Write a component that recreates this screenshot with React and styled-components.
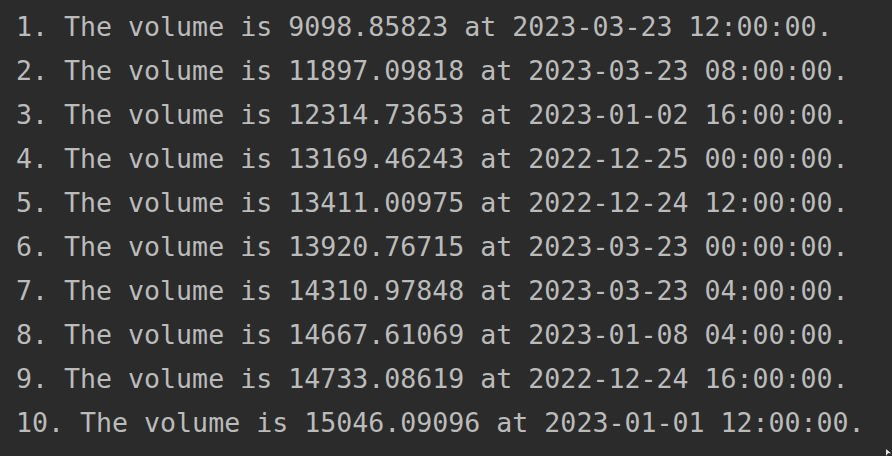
import React from "react";
import styled, { createGlobalStyle } from "styled-components";

const Global = createGlobalStyle`
  html, body { margin: 0; padding: 0; background: #2b2b2b; }
  body { width: 892px; height: 456px; overflow: hidden; }
`;

const Console = styled.div`
  box-sizing: border-box;
  width: 892px;
  height: 456px;
  background: #2b2b2b;
  padding: 5px 0 0 16px;
  display: flex;
  flex-direction: column;
  position: relative;
`;

const Line = styled.div`
  font-family: "DejaVu Sans Mono", "Liberation Mono", monospace;
  font-size: 26.6px;
  line-height: 44px;
  height: 44px;
  color: #bbbbbb;
  white-space: pre;
`;

const Pointer = styled.div`
  position: absolute;
  right: 1px;
  bottom: 0;
  width: 5px;
  height: 7px;
  background: #e8e8e8;
  clip-path: polygon(0 0, 100% 60%, 40% 60%, 0 100%);
`;

const rows = [
  ["9098.85823", "2023-03-23 12:00:00"],
  ["11897.09818", "2023-03-23 08:00:00"],
  ["12314.73653", "2023-01-02 16:00:00"],
  ["13169.46243", "2022-12-25 00:00:00"],
  ["13411.00975", "2022-12-24 12:00:00"],
  ["13920.76715", "2023-03-23 00:00:00"],
  ["14310.97848", "2023-03-23 04:00:00"],
  ["14667.61069", "2023-01-08 04:00:00"],
  ["14733.08619", "2022-12-24 16:00:00"],
  ["15046.09096", "2023-01-01 12:00:00"],
];

export default function App() {
  return (
    <>
      <Global />
      <Console>
        {rows.map(([v, t], i) => (
          <Line key={i}>{`${i + 1}. The volume is ${v} at ${t}.`}</Line>
        ))}
        <Pointer />
      </Console>
    </>
  );
}
